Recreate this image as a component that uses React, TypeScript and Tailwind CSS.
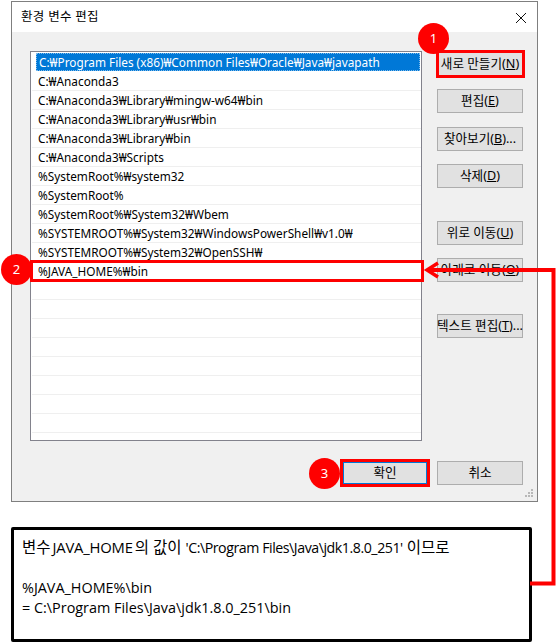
const paths = [
  'C:₩Program Files (x86)₩Common Files₩Oracle₩Java₩javapath',
  'C:₩Anaconda3',
  'C:₩Anaconda3₩Library₩mingw-w64₩bin',
  'C:₩Anaconda3₩Library₩usr₩bin',
  'C:₩Anaconda3₩Library₩bin',
  'C:₩Anaconda3₩Scripts',
  '%SystemRoot%₩system32',
  '%SystemRoot%',
  '%SystemRoot%₩System32₩Wbem',
  '%SYSTEMROOT%₩System32₩WindowsPowerShell₩v1.0₩',
  '%SYSTEMROOT%₩System32₩OpenSSH₩',
  '%JAVA_HOME%₩bin',
  '', '', '', '', '', '', '', '',
];

function Btn({ label, hot, after, className = '' }: { label: string; hot: string; after?: string; className?: string }) {
  return (
    <button className={`w-[86px] h-[24px] shrink-0 bg-[#e1e1e1] border border-[#adadad] flex items-center justify-center whitespace-nowrap text-[12.6px] text-black ${className}`}>
      {label}(<span className="underline">{hot}</span>){after}
    </button>
  );
}

function Badge({ n, className }: { n: number; className: string }) {
  return (
    <div className={`absolute w-[31px] h-[31px] rounded-full bg-[#fe0000] text-white text-[13px] flex items-center justify-center ${className}`}>
      {n}
    </div>
  );
}

export default function App() {
  return (
    <div className="relative w-[557px] h-[643px] overflow-hidden bg-white pt-px pl-[11px] text-black" style={{ fontFamily: '"Noto Sans", "Noto Sans CJK KR", sans-serif' }}>
      <div className="w-[527px] h-[501px] border border-[#7f7f7f] flex flex-col bg-[#f0f0f0] relative">
        <div className="h-[30px] bg-white flex items-center justify-between pl-[9px] pr-[10px] shrink-0">
          <span className="text-[12.5px] tracking-[0.3px]">환경 변수 편집</span>
          <svg width="12" height="12" viewBox="0 0 12 12" className="mt-[1px]">
            <path d="M1 1L11 11M11 1L1 11" stroke="#111" strokeWidth="1" fill="none" />
          </svg>
        </div>
        <div className="flex pl-[18px] pt-[19px]">
          <div className="w-[392px] h-[390px] border border-[#82828c] bg-white pt-px pl-px overflow-hidden shrink-0">
            {paths.map((p, i) => (
              <div
                key={i}
                className={
                  i === 0
                    ? 'h-[18px] mb-px ml-[4px] mr-px pl-[2px] bg-[#0078d7] text-white text-[11.8px] leading-[16px] border border-dotted border-[#7fbbeb] whitespace-nowrap'
                    : 'h-[19px] pl-[6px] text-[11.8px] leading-[18px] border-b border-[#efefef] whitespace-nowrap'
                }
              >
                {p}
              </div>
            ))}
          </div>
          <div className="flex flex-col ml-[15px] pt-px">
            <Btn label="새로 만들기" hot="N" />
            <Btn label="편집" hot="E" className="mt-[13px]" />
            <Btn label="찾아보기" hot="B" after="..." className="mt-[14px]" />
            <Btn label="삭제" hot="D" className="mt-[13px]" />
            <Btn label="위로 이동" hot="U" className="mt-[33px]" />
            <Btn label="아래로 이동" hot="O" className="mt-[13px]" />
            <Btn label="텍스트 편집" hot="T" after="..." className="mt-[32px]" />
          </div>
        </div>
        <div className="flex justify-end items-center pr-[14px] mt-[20px] gap-[10px]">
          <button className="w-[84px] h-[22px] bg-[#e1e1e1] border border-[#0078d7] text-[12.6px]">확인</button>
          <button className="w-[86px] h-[24px] bg-[#e1e1e1] border border-[#adadad] text-[12.6px]">취소</button>
        </div>
        {/* size grip */}
        <svg width="9" height="9" viewBox="0 0 9 9" className="absolute right-[3px] bottom-[3px]" fill="#b8b8b8">
          <rect x="6" y="0" width="2" height="2" />
          <rect x="3" y="3" width="2" height="2" />
          <rect x="6" y="3" width="2" height="2" />
          <rect x="0" y="6" width="2" height="2" />
          <rect x="3" y="6" width="2" height="2" />
          <rect x="6" y="6" width="2" height="2" />
        </svg>
      </div>

      <div className="mt-[25px] w-[521px] h-[115px] border-[3px] border-black rounded-[2px] bg-white pl-[8px] pt-[7px] text-[14.4px] leading-[20px]" style={{ fontFamily: '"Open Sans", "Noto Sans CJK KR", sans-serif' }}>
        <div className="whitespace-nowrap">
          <span className="text-[15.5px]">변수</span>
          <span className="ml-[2px] text-[14.8px] tracking-[-0.2px]">JAVA_HOME</span>
          <span className="ml-[2px] text-[15.5px]">의 값이</span>
          <span className="ml-[4px] text-[14.2px] tracking-[-0.45px]">'C:\Program Files\Java\jdk1.8.0_251'</span>
          <span className="ml-[4px] text-[15.5px]">이므로</span>
        </div>
        <div className="h-[20px]" />
        <div>%JAVA_HOME%\bin</div>
        <div>= C:\Program Files\Java\jdk1.8.0_251\bin</div>
      </div>

      {/* annotations */}
      <div className="absolute left-[436px] top-[50px] w-[89px] h-[28px] border-[3px] border-[#fe0000]" />
      <div className="absolute left-[30px] top-[260px] w-[394px] h-[22px] border-[3px] border-[#fe0000]" />
      <div className="absolute left-[340px] top-[459px] w-[90px] h-[28px] border-[3px] border-[#fe0000]" />
      <Badge n={1} className="left-[418px] top-[23px]" />
      <Badge n={2} className="left-[1px] top-[254px]" />
      <Badge n={3} className="left-[309px] top-[458px]" />
      <svg width="557" height="643" className="absolute left-0 top-0 pointer-events-none" fill="none" stroke="#fe0000" strokeWidth="4">
        <path d="M530 583.5H553.5V270H428" />
        <path d="M438 263L427 270L438 277" strokeWidth="3.5" />
      </svg>
    </div>
  );
}
